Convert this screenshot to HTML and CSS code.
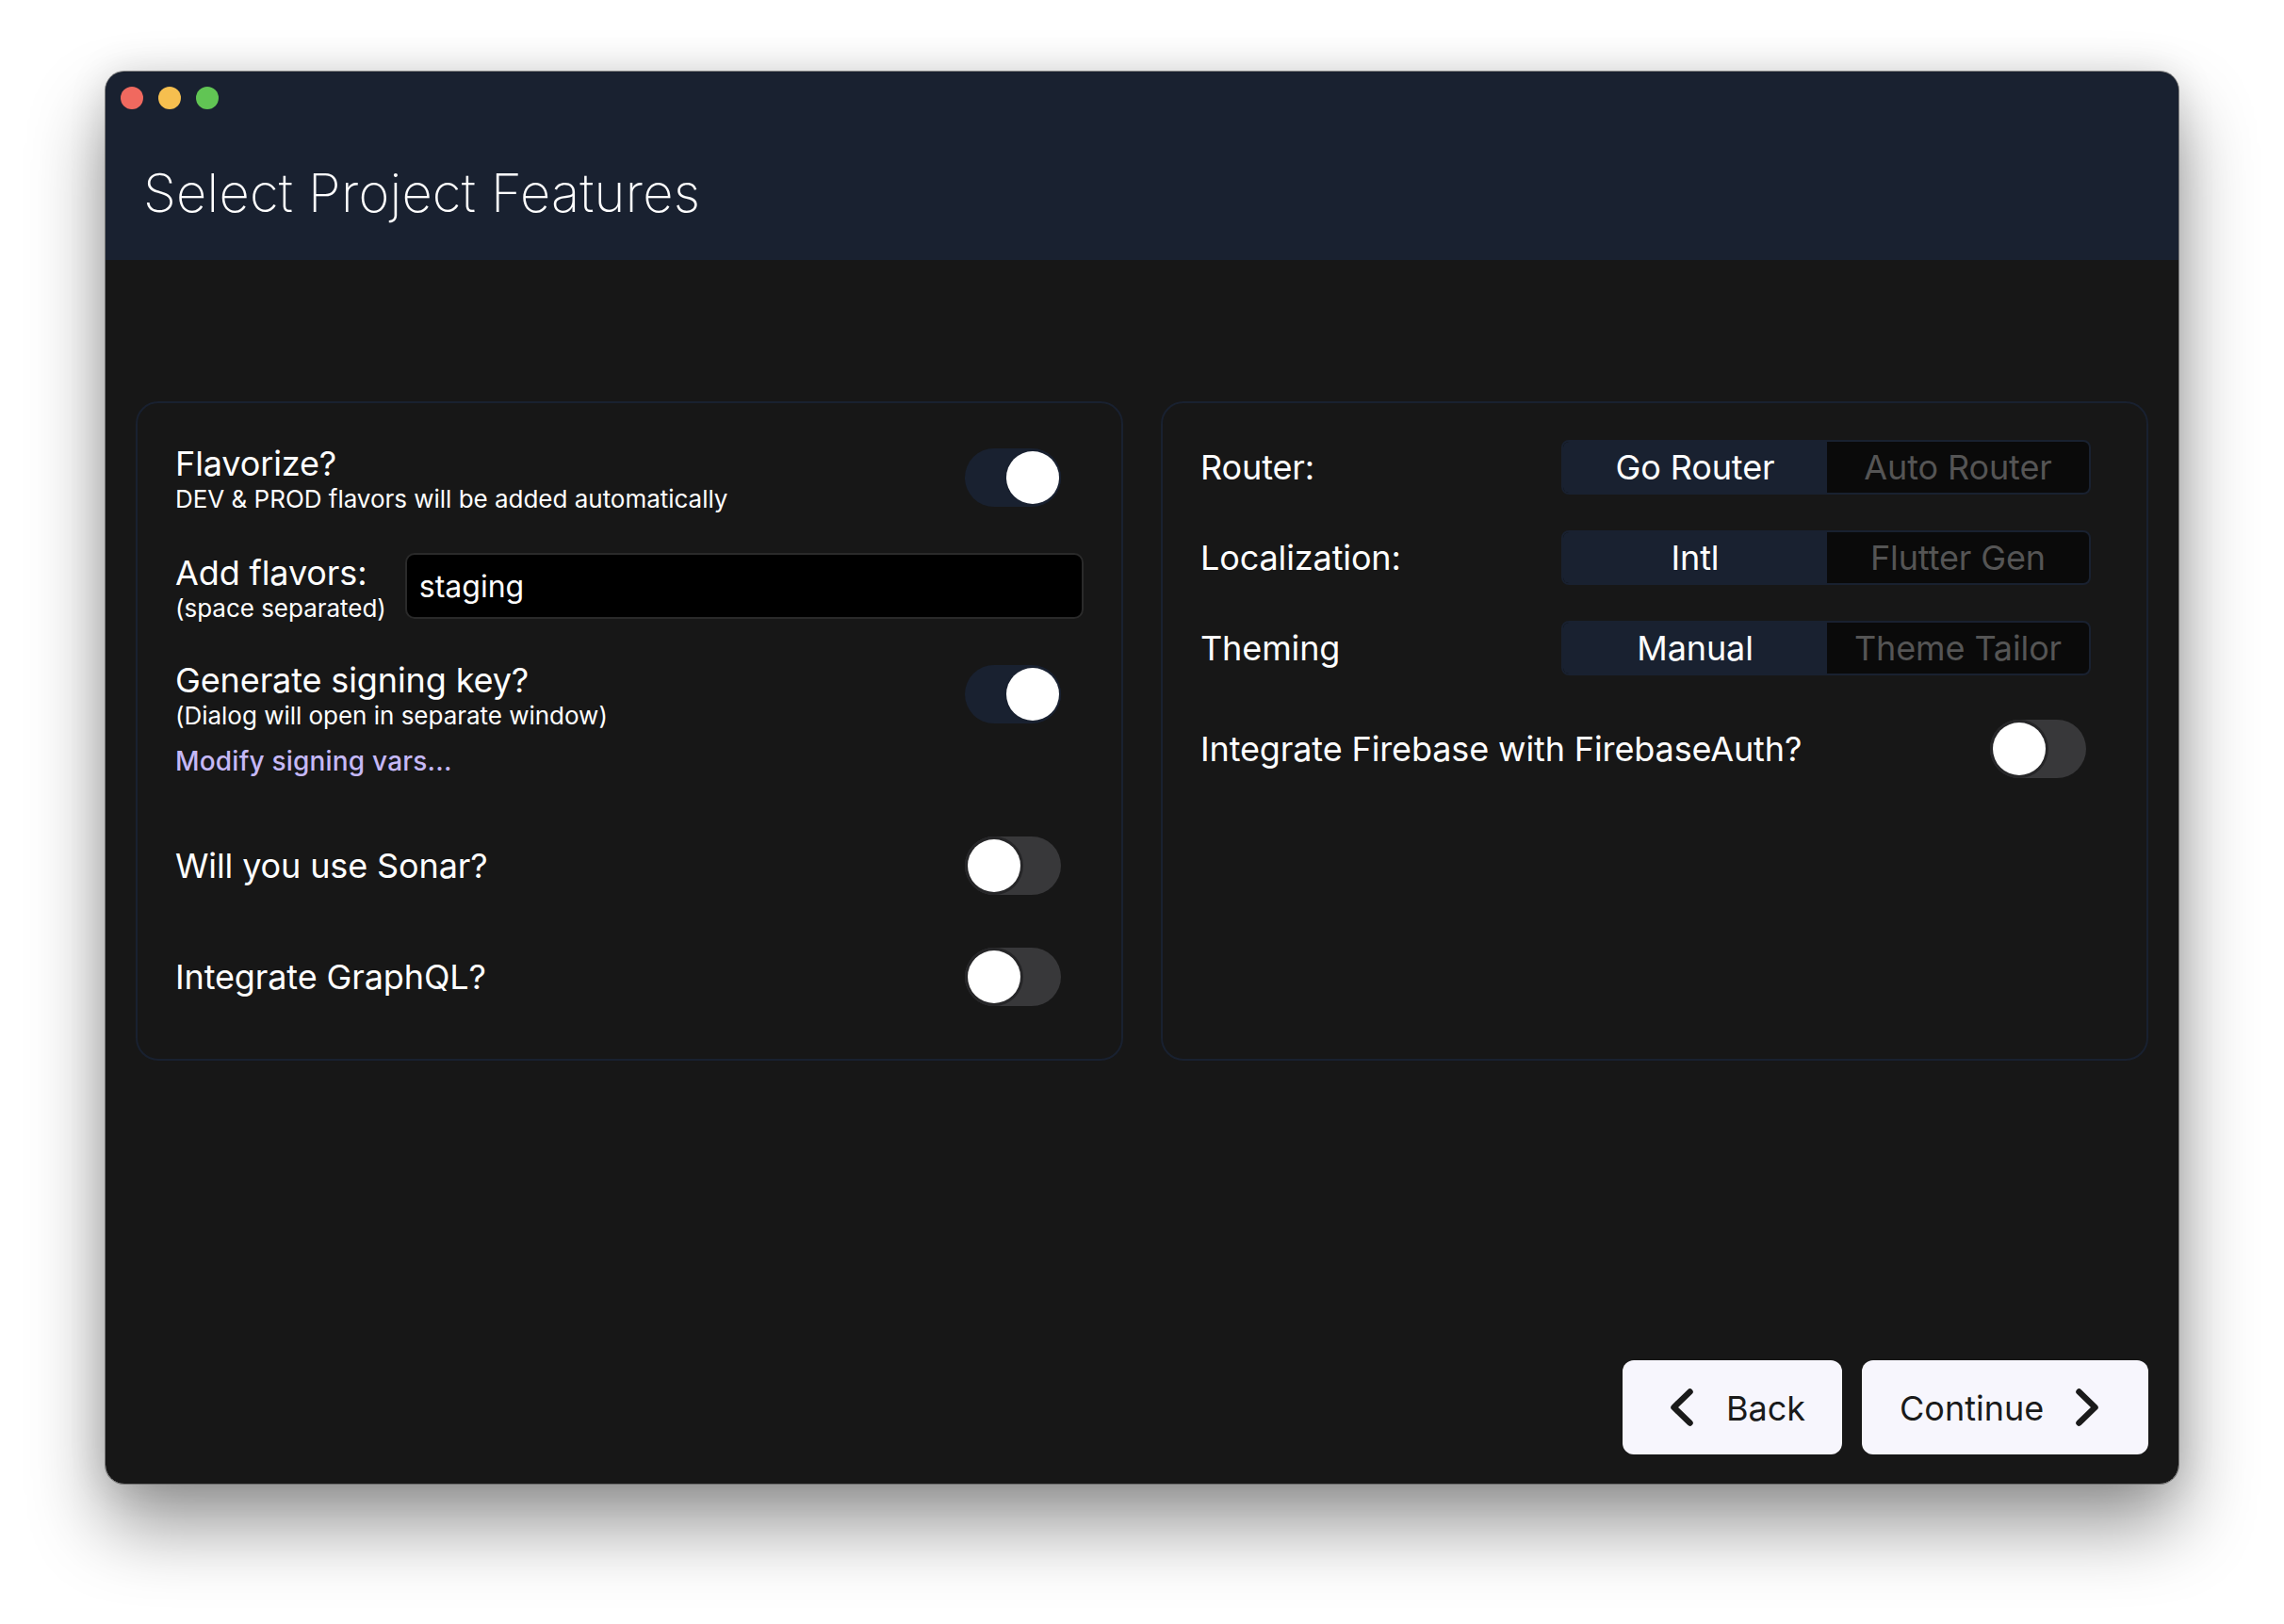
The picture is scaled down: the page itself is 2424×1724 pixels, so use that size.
FILE: index.html
```html
<!DOCTYPE html>
<html lang="en">
<head>
    <meta charset="UTF-8" />
    <title>Select Project Features</title>
    <link rel="stylesheet" href="styles.css">
</head>
<body>
    <div class="window">
        <header class="header">
            <div class="lights">
                <span class="light red"></span>
                <span class="light yellow"></span>
                <span class="light green"></span>
            </div>
            <h1>Select Project Features</h1>
        </header>

        <main class="main">
            <div class="panels">
                <section class="panel left-panel">
                    <div class="row flavor-row">
                        <div>
                            <div class="label">Flavorize?</div>
                            <div class="sub">DEV &amp; PROD flavors will be added automatically</div>
                        </div>
                        <div class="toggle on"><span class="thumb"></span></div>
                    </div>
                    <div class="row add-row">
                        <div>
                            <div class="label">Add flavors:</div>
                            <div class="sub">(space separated)</div>
                        </div>
                        <input class="flavor-input" type="text" value="staging" />
                    </div>
                    <div class="row signing-row">
                        <div>
                            <div class="label">Generate signing key?</div>
                            <div class="sub">(Dialog will open in separate window)</div>
                        </div>
                        <div class="toggle on"><span class="thumb"></span></div>
                    </div>
                    <a class="link">Modify signing vars...</a>
                    <div class="row sonar-row">
                        <div class="label">Will you use Sonar?</div>
                        <div class="toggle"><span class="thumb"></span></div>
                    </div>
                    <div class="row graphql-row">
                        <div class="label">Integrate GraphQL?</div>
                        <div class="toggle"><span class="thumb"></span></div>
                    </div>
                </section>

                <section class="panel right-panel">
                    <div class="option-row">
                        <div class="label">Router:</div>
                        <div class="segment">
                            <div class="seg-item active">Go Router</div>
                            <div class="seg-item">Auto Router</div>
                        </div>
                    </div>
                    <div class="option-row">
                        <div class="label">Localization:</div>
                        <div class="segment">
                            <div class="seg-item active">Intl</div>
                            <div class="seg-item">Flutter Gen</div>
                        </div>
                    </div>
                    <div class="option-row">
                        <div class="label">Theming</div>
                        <div class="segment">
                            <div class="seg-item active">Manual</div>
                            <div class="seg-item">Theme Tailor</div>
                        </div>
                    </div>
                    <div class="row firebase-row">
                        <div class="label">Integrate Firebase with FirebaseAuth?</div>
                        <div class="toggle"><span class="thumb"></span></div>
                    </div>
                </section>
            </div>

            <footer class="footer">
                <button class="btn back-btn">
                    <svg width="24" height="40" viewBox="0 0 24 40"><path d="M20.5 3.5 L3.5 20 L20.5 36.5" /></svg>
                    Back
                </button>
                <button class="btn next-btn">
                    Continue
                    <svg width="24" height="40" viewBox="0 0 24 40"><path d="M3.5 3.5 L20.5 20 L3.5 36.5" /></svg>
                </button>
            </footer>
        </main>
    </div>
</body>
</html>
```

FILE: styles.css
```css
html, body {
    margin: 0;
    padding: 0;
    background: #fff;
    font-family: 'Inter', 'Liberation Sans', sans-serif;
    color: #fff;
}

body {
    width: 2424px;
    height: 1724px;
    padding: 76px 112px 149px;
    box-sizing: border-box;
    overflow: hidden;
}

.window {
    width: 2200px;
    height: 1499px;
    background: #171717;
    border-radius: 20px;
    overflow: hidden;
    display: flex;
    flex-direction: column;
}

/* the shadow has to sit outside the clipped window */
body::before {
    content: "";
    position: absolute;
    left: 112px;
    top: 76px;
    width: 2200px;
    height: 1499px;
    border-radius: 20px;
    box-shadow: 0 0 0 1px rgba(90, 90, 90, 0.7), 0 44px 80px rgba(0, 0, 0, 0.42), 0 0 40px rgba(0, 0, 0, 0.12);
}

.header {
    position: relative;
    height: 200px;
    background: #192130;
    flex-shrink: 0;
}

.lights {
    display: flex;
    gap: 16px;
    padding: 16px 0 0 16px;
}

.light {
    width: 24px;
    height: 24px;
    border-radius: 50%;
}

.red { background: #f0695f; }
.yellow { background: #f6bf4f; }
.green { background: #61c554; }

h1 {
    margin: 55px 0 0 40px;
    font-size: 56px;
    line-height: 68px;
    font-weight: 200;
    letter-spacing: 0.25px;
    color: #fff;
}

.main {
    flex: 1;
    display: flex;
    flex-direction: column;
    padding: 150px 32px 31px;
}

.panels {
    display: flex;
    gap: 40px;
}

.panel {
    width: 1048px;
    height: 700px;
    box-sizing: border-box;
    border: 2px solid #192130;
    border-radius: 24px;
    padding-left: 40px;
}

.left-panel {
    padding-top: 42px;
    padding-right: 40px;
}

.right-panel {
    padding-top: 39px;
}

.row {
    display: flex;
    align-items: center;
    justify-content: space-between;
}

.label {
    font-size: 36px;
    line-height: 44px;
    letter-spacing: -0.12px;
    white-space: nowrap;
}

.sub {
    font-size: 26px;
    line-height: 30px;
    letter-spacing: -0.02px;
    white-space: nowrap;
    position: relative;
    top: 1px;
}

.toggle {
    position: relative;
    width: 102px;
    height: 62px;
    border-radius: 31px;
    background: #38383a;
    margin-right: 24px;
    flex-shrink: 0;
}

.toggle.on {
    background: #192130;
}

.thumb {
    position: absolute;
    top: 3px;
    left: 3px;
    width: 56px;
    height: 56px;
    border-radius: 50%;
    background: #fff;
    box-shadow: 0 0 0 3px #262628;
}

.toggle.on .thumb {
    left: auto;
    right: 2px;
    box-shadow: 0 0 0 2px #192130;
}

.add-row {
    margin-top: 42px;
    gap: 20px;
}

.flavor-input {
    flex: 1;
    min-width: 0;
    height: 70px;
    margin-bottom: 2px;
    box-sizing: border-box;
    background: #000;
    border: 2px solid #2a2a2a;
    border-radius: 10px;
    padding: 0 13px;
    font-family: inherit;
    font-size: 32px;
    color: #fff;
    outline: none;
}

.signing-row {
    margin-top: 40px;
}

.link {
    display: block;
    margin-top: 17px;
    font-size: 28px;
    line-height: 34px;
    font-weight: 500;
    letter-spacing: 0.2px;
    color: #c5b8f6;
}

.sonar-row {
    margin-top: 63px;
}

.graphql-row {
    margin-top: 56px;
}

.option-row {
    display: flex;
    align-items: center;
    margin-bottom: 38px;
}

.option-row .label {
    width: 383px;
}

.segment {
    display: flex;
    width: 562px;
    height: 58px;
    box-sizing: border-box;
    border: 2px solid #192130;
    border-radius: 8px;
    overflow: hidden;
    background: #0a0a0a;
}

.seg-item {
    flex: 1;
    display: flex;
    align-items: center;
    justify-content: center;
    font-size: 36px;
    letter-spacing: -0.12px;
    color: #555;
    white-space: nowrap;
}

.seg-item.active {
    flex: 0 0 280px;
    background: #192130;
    color: #fff;
}

.firebase-row {
    margin-top: 47px;
}

.firebase-row .toggle {
    margin-right: 64px;
}

.footer {
    margin-top: auto;
    display: flex;
    justify-content: flex-end;
    gap: 21px;
}

.btn {
    display: flex;
    align-items: center;
    height: 100px;
    box-sizing: border-box;
    border: none;
    border-radius: 12px;
    background: #f7f6fd;
    color: #1a1a1a;
    font-family: inherit;
    font-size: 36px;
    padding-top: 2px;
    cursor: pointer;
}

.btn svg {
    margin-top: -2px;
}

.btn svg path {
    fill: none;
    stroke: #1a1a1a;
    stroke-width: 6.5;
    stroke-linecap: round;
    stroke-linejoin: round;
}

.back-btn {
    width: 233px;
    padding-left: 51px;
    padding-right: 0;
    gap: 35px;
}

.next-btn {
    width: 304px;
    padding-left: 40px;
    padding-right: 0;
    gap: 34px;
}
```
